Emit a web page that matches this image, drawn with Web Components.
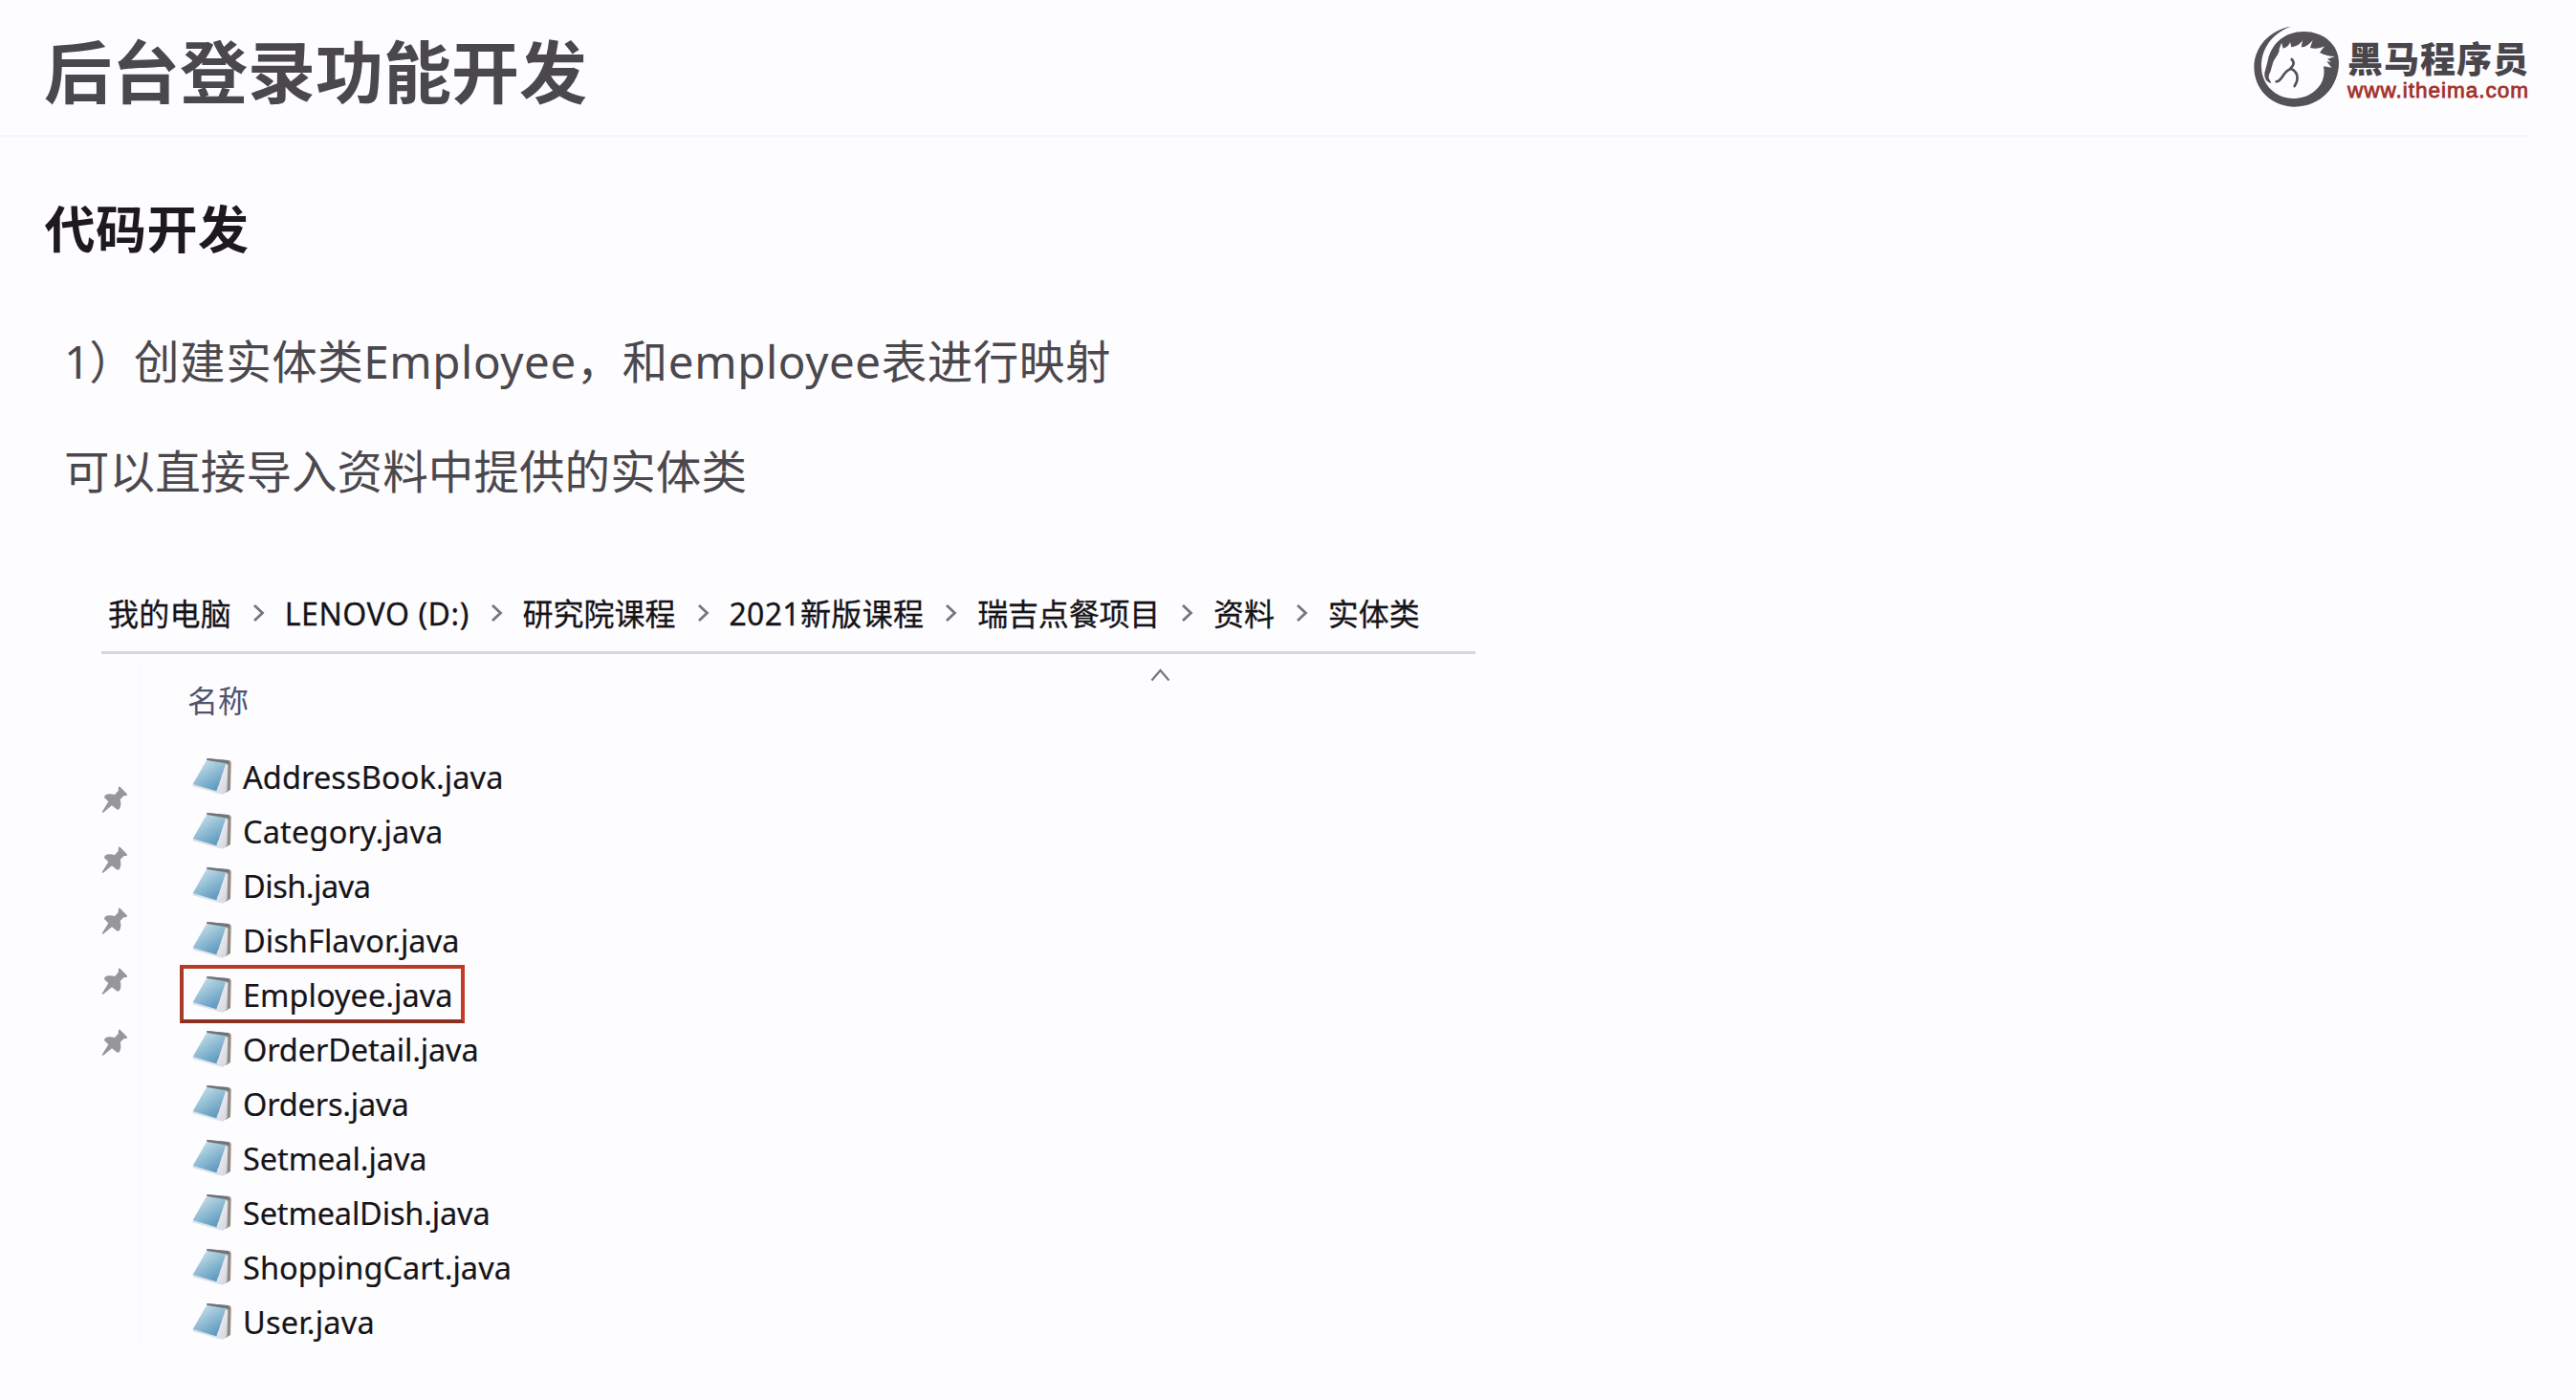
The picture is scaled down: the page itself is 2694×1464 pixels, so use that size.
<!DOCTYPE html>
<html lang="zh-CN">
<head>
<meta charset="utf-8">
<title>后台登录功能开发</title>
<style>
html,body{margin:0;background:#fdfcfe}
body{width:2694px;height:1464px;overflow:hidden;font-family:"Noto Sans","Noto Sans CJK SC",sans-serif;color:#4b484d}
</style>
</head>
<body>
<lesson-slide></lesson-slide>
<script>
const define=(name,html,setup)=>{
  const t=document.createElement('template');t.innerHTML=html;
  customElements.define(name,class extends HTMLElement{
    connectedCallback(){
      if(this.shadowRoot)return;
      this.attachShadow({mode:'open'}).append(t.content.cloneNode(true));
      if(setup)setup(this);
    }
  });
};

/* One line of text, tracked so that it spans the width given in its attribute. */
define('fit-text',`<style>:host{display:block;white-space:pre;width:max-content}span{display:inline-block}</style><span><slot></slot></span>`,el=>{
  const s=el.shadowRoot.querySelector('span'),w=+el.getAttribute('w');
  if(w)s.style.letterSpacing=(w-s.getBoundingClientRect().width)/[...el.textContent].length+'px';
});

define('horse-mark',`<style>:host{display:block;width:100px;height:96px}svg{display:block}</style>
<svg width="100" height="96" viewBox="0 0 300 288">
<path fill="#555257" d="M137 17C72 28 22 80 22 145C22 216 78 269 150 269C232 269 288 205 288 130C288 74 240 33 178 33C120 33 76 68 64 128L55 162C53 180 62 192 76 195L72 186C66 180 67 170 73 160L82 128C90 112 102 102 101 88L108 68L113 86C122 84 132 77 135 66L139 82C152 81 166 73 174 61L170 82C185 81 198 71 206 59L198 84C212 88 228 87 243 79L228 99C240 106 255 111 276 111L252 119L264 128L250 127L265 146L240 142C246 175 235 205 205 225C186 239 160 243 145 243C90 243 46 200 45 145C43 90 76 40 137 17Z"/>
<path fill="none" stroke="#555257" stroke-width="8" stroke-linecap="round" d="M92 190C108 190 112 164 128 155L138 149M140 120C151 132 145 139 136 149C156 156 166 177 149 204"/>
</svg>`);

define('brand-logo',`<style>
:host{display:flex;gap:5px}
.t{display:flex;flex-direction:column;margin-top:16px;white-space:nowrap}
.n{font:900 37px/44px "Noto Sans CJK SC",sans-serif;color:#48454b}
.u{font:22.5px/24px "Liberation Sans",sans-serif;color:#a5302a;-webkit-text-stroke:.8px #a5302a;margin-top:1px}
</style><horse-mark></horse-mark><div class="t"><fit-text class="n" w="190">黑马程序员</fit-text><fit-text class="u" w="190">www.itheima.com</fit-text></div>`);

define('slide-header',`<style>
:host{display:flex;justify-content:space-between;width:2599px;height:141px;padding-left:46px;border-bottom:2px solid #f7f5f9}
h1{margin:4px 0 0;font-size:71px;line-height:142px;font-weight:700}
brand-logo{margin-top:22px}
</style><h1><fit-text w="576"><slot></slot></fit-text></h1><brand-logo></brand-logo>`);

define('path-chevron',`<style>:host{display:block}svg{display:block}</style>
<svg width="13" height="20" viewBox="0 0 13 20"><path d="M2 2L10.5 10L2 18" fill="none" stroke="#77757a" stroke-width="2.8"/></svg>`);

define('path-bar',`<style>
:host{display:flex;align-items:center;height:70px;width:1430px;padding-left:7px;box-sizing:content-box;border-bottom:3px solid #d8d6da;color:#161418;font-size:32px;line-height:60px;-webkit-text-stroke:.3px #161418}
fit-text{margin-bottom:8px}path-chevron{margin:0 20.8px 10px 22px}
</style>`,el=>{
  const items=[['我的电脑',129],['LENOVO (D:)',193],['研究院课程',160],['2021新版课程',204],['瑞吉点餐项目',191],['资料',64],['实体类',96]];
  items.forEach(([t,w],i)=>{
    if(i)el.shadowRoot.append(document.createElement('path-chevron'));
    const f=document.createElement('fit-text');f.setAttribute('w',w);f.textContent=t;el.shadowRoot.append(f);
  });
});

define('pin-icon',`<style>:host{display:block;width:28px;height:28px}svg{display:block}</style>
<svg width="28" height="28" viewBox="0 0 84 84"><path fill="#98969b" d="M54 2Q57 1 60 4L80 24Q83 28 79 30L70 31L59 42C63 55 61 65 56 73L50 74L33 61L5 84L2 81L22 49L9 36L11 29C20 24 30 24 42 27L53 15Z"/></svg>`);

define('note-icon',`<style>:host{display:block;width:42px;height:40px}svg{display:block}</style>
<svg width="42" height="40" viewBox="0 0 126 120">
<defs><linearGradient id="b" x1=".1" y1="0" x2=".75" y2="1"><stop offset="0" stop-color="#d3e6ef"/><stop offset=".5" stop-color="#91bdd4"/><stop offset="1" stop-color="#5694bd"/></linearGradient>
<linearGradient id="p" x1="0" y1="0" x2="1" y2="1"><stop offset="0" stop-color="#fff"/><stop offset="1" stop-color="#d0d2dc"/></linearGradient></defs>
<path fill="#938a83" d="M46 3L115 9Q122 11 122 18L120 102L106 110L88 105Z"/>
<path fill="#6f747a" d="M46 3L113 10L117 18L108 20L46 9Z"/>
<path fill="url(#p)" d="M104 17L112 25L109 104L98 116L64 106L80 96Z"/>
<path fill="#d9e1e8" d="M2 84L84 106L98 115L88 115L2 91Z"/>
<path fill="url(#b)" d="M45 9L106 19L76 106L2 84Z"/>
</svg>`);

define('file-row',`<style>
:host{display:flex;align-items:center;box-sizing:border-box;width:max-content;height:61px;margin-bottom:-4px;padding:0 9px;border:4px solid transparent;color:#161418;font-size:32.5px;line-height:51px;-webkit-text-stroke:.2px #161418}
:host([marked]){border-color:#b93a26 #c83a28 #8c3020 #a93a26;padding-right:8px}
note-icon{margin-right:11px}fit-text{padding-top:2px}
</style><note-icon></note-icon>`,el=>{
  const f=document.createElement('fit-text');f.setAttribute('w',el.getAttribute('w'));f.textContent=el.getAttribute('name');el.shadowRoot.append(f);
});

define('file-list',`<style>
:host{display:flex;flex-direction:column}
header{display:flex;align-items:flex-start;justify-content:space-between;width:1036px;height:97px;color:#50546f}
fit-text{font-size:32px;line-height:50px;margin:24px 0 0 8px}
svg{margin-top:14px}
</style><header><fit-text w="64">名称</fit-text><svg width="21" height="15" viewBox="0 0 21 15"><path d="M1.5 13.5L10.5 3L19.500 13.5" fill="none" stroke="#77757a" stroke-width="2.2"/></svg></header>`,el=>{
  [['AddressBook',272.5],['Category',209.5],['Dish',133.5],['DishFlavor',226.5],['Employee',219.5],['OrderDetail',246.5],['Orders',173.5],['Setmeal',192.5],['SetmealDish',258.5],['ShoppingCart',281],['User',138]].forEach(([n,w])=>{
    const r=document.createElement('file-row');r.setAttribute('name',n+'.java');r.setAttribute('w',w);
    if(n==='Employee')r.setAttribute('marked','');
    el.shadowRoot.append(r);
  });
});

define('pin-rail',`<style>
:host{display:flex;flex-direction:column;gap:35.4px;box-sizing:border-box;width:41px;height:711px;padding-top:128px;margin-top:10px;border-right:2px solid #fbf9fd}
</style>`+'<pin-icon></pin-icon>'.repeat(5));

define('file-explorer',`<style>
:host{display:block}.body{display:flex;gap:41px}
</style><path-bar></path-bar><div class="body"><pin-rail></pin-rail><file-list></file-list></div>`);

define('lesson-slide',`<style>
:host{display:flex;flex-direction:column}
h2{margin:47px 0 30px 46.5px;font-size:53px;line-height:100px;font-weight:700;color:#1d191f}
p{display:flex;margin:0 0 0 67px;font-size:47.5px;line-height:115px}
file-explorer{margin:61px 0 0 106px}
</style>
<slide-header>后台登录功能开发</slide-header>
<h2><fit-text w="214">代码开发</fit-text></h2>
<p><fit-text w="73">1）</fit-text><fit-text w="1022">创建实体类Employee，和employee表进行映射</fit-text></p>
<p><fit-text w="714">可以直接导入资料中提供的实体类</fit-text></p>
<file-explorer></file-explorer>`);
</script>
</body>
</html>
